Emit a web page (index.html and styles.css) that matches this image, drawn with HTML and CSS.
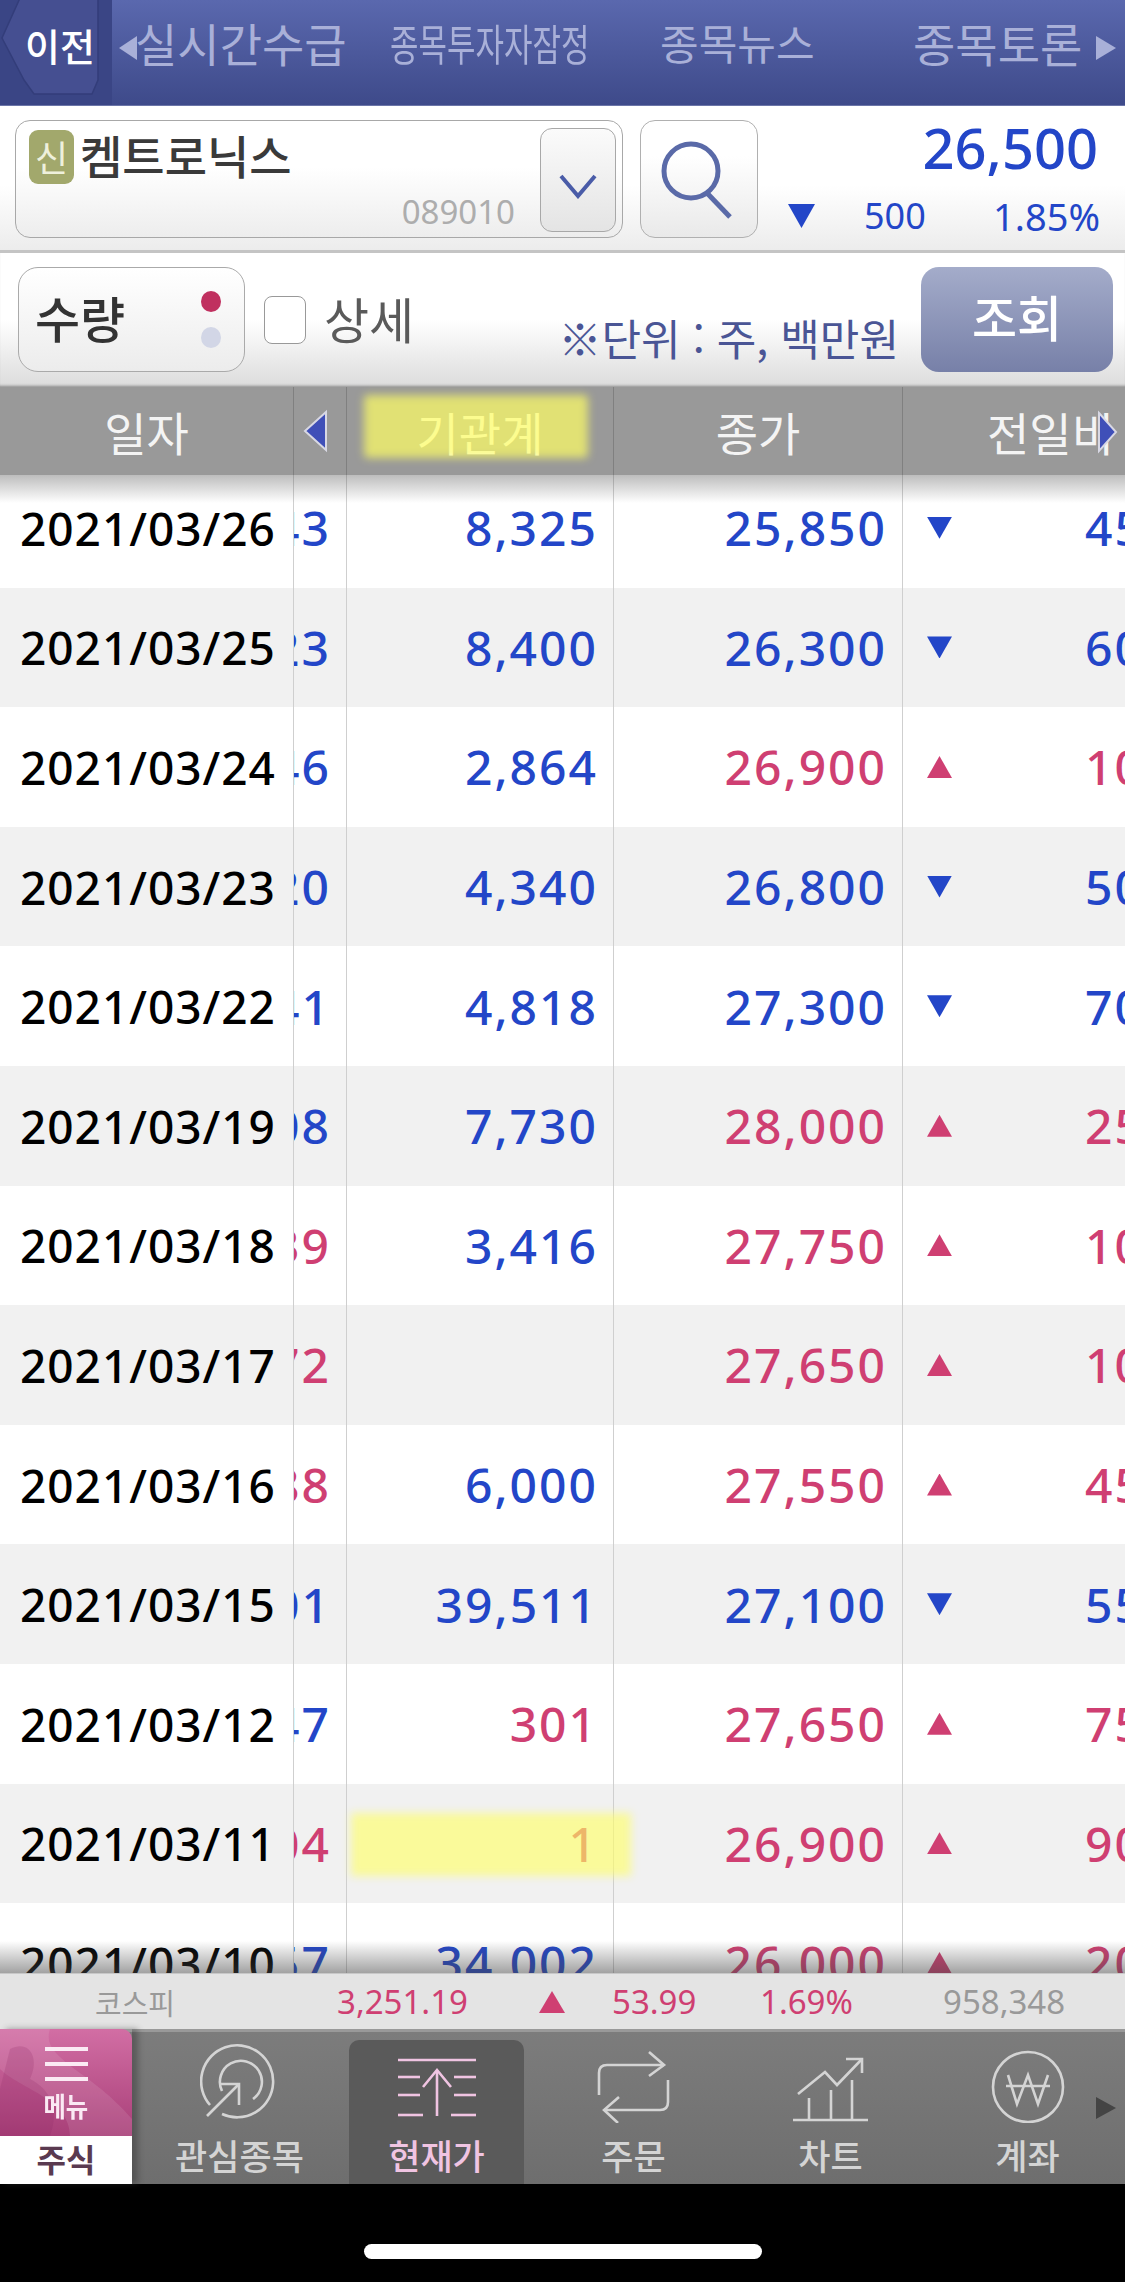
FILE: index.html
```html
<!DOCTYPE html>
<html lang="ko">
<head>
    <meta charset="UTF-8">
    <title>종목 투자자별 매매</title>
    <link rel="stylesheet" href="styles.css">
</head>
<body>
<div class="page">
    <!--상단 탭-->
    <div class="topNav">
        <div class="backBtn">
            <svg class="backShape" width="100" height="96" viewBox="0 0 100 96"><path d="M20 -2 L98 -2 L98 80 L92 94 L34 94 L24 80 L2 38 Z" fill="#454f91" stroke="#333d7a" stroke-width="1.5"/></svg>
            <span class="backText">이전</span>
        </div>
        <i class="navArrow navArrowLeft"></i>
        <span class="navTab navTab1">실시간수급</span>
        <span class="navTab navTab2"><b>종목투자자잠정</b></span>
        <span class="navTab navTab3">종목뉴스</span>
        <span class="navTab navTab4">종목토론</span>
        <i class="navArrow navArrowRight"></i>
    </div>

    <!--종목 검색-->
    <div class="stockBar">
        <div class="stockBox">
            <div class="stockInfo">
                <div class="stockName"><span class="badge">신</span>켐트로닉스</div>
                <div class="stockCode">089010</div>
            </div>
            <div class="dropBtn">
                <svg width="40" height="26" viewBox="0 0 40 26"><path d="M3 3 L20 23 L37 3" fill="none" stroke="#4a5ca8" stroke-width="4"/></svg>
            </div>
        </div>
        <div class="searchBtn">
            <svg width="90" height="90" viewBox="0 0 90 90"><circle cx="39" cy="38" r="27" fill="none" stroke="#5a6aa8" stroke-width="5"/><path d="M55 60 L78 84" fill="none" stroke="#5a6aa8" stroke-width="5"/></svg>
        </div>
        <div class="priceBox">
            <div class="price">26,500</div>
            <div class="priceSub"><i class="tri dn"></i><span class="priceDiff">500</span><span class="priceRate">1.85%</span></div>
        </div>
    </div>

    <!--조회 조건-->
    <div class="orderBar">
        <div class="qtyBox">
            <span class="qtyText">수량</span>
            <div class="qtyDots"><span class="dotOn"></span><span class="dotOff"></span></div>
        </div>
        <span class="checkBox"></span>
        <span class="detailText">상세</span>
        <span class="unitText">※단위 : 주, 백만원</span>
        <div class="queryBtn">조회</div>
    </div>

    <!--표 머리글-->
    <div class="row headRow">
        <div class="cell">일자</div>
        <div class="cell">
            <svg class="headPrev" width="28" height="44" viewBox="0 0 28 44"><path d="M25 3 L4 22 L25 41 Z" fill="#3f4fb8" stroke="#d8d8e4" stroke-width="2"/></svg>
        </div>
        <div class="cell">기관계</div>
        <div class="cell">종가</div>
        <div class="cell headChange">전일비</div>
        <svg class="headNext" width="26" height="44" viewBox="0 0 26 44"><path d="M5 3 L22 22 L5 41 Z" fill="#3f4fb8" stroke="#d8d8e4" stroke-width="2"/></svg>
        <div class="markHead"></div>
    </div>

    <!--표 본문-->
    <div class="tableBody">
        <div class="rows">
            <div class="row"><div class="cell date">2021/03/26</div><div class="cell num blue"><span>1,243</span></div><div class="cell num blue">8,325</div><div class="cell num blue">25,850</div><div class="cell change blue"><i class="tri dn"></i><span>450</span></div></div>
            <div class="row"><div class="cell date">2021/03/25</div><div class="cell num blue"><span>1,123</span></div><div class="cell num blue">8,400</div><div class="cell num blue">26,300</div><div class="cell change blue"><i class="tri dn"></i><span>600</span></div></div>
            <div class="row"><div class="cell date">2021/03/24</div><div class="cell num blue"><span>1,146</span></div><div class="cell num blue">2,864</div><div class="cell num red">26,900</div><div class="cell change red"><i class="tri up"></i><span>100</span></div></div>
            <div class="row"><div class="cell date">2021/03/23</div><div class="cell num blue"><span>1,120</span></div><div class="cell num blue">4,340</div><div class="cell num blue">26,800</div><div class="cell change blue"><i class="tri dn"></i><span>500</span></div></div>
            <div class="row"><div class="cell date">2021/03/22</div><div class="cell num blue"><span>1,141</span></div><div class="cell num blue">4,818</div><div class="cell num blue">27,300</div><div class="cell change blue"><i class="tri dn"></i><span>700</span></div></div>
            <div class="row"><div class="cell date">2021/03/19</div><div class="cell num blue"><span>1,008</span></div><div class="cell num blue">7,730</div><div class="cell num red">28,000</div><div class="cell change red"><i class="tri up"></i><span>250</span></div></div>
            <div class="row"><div class="cell date">2021/03/18</div><div class="cell num red"><span>1,339</span></div><div class="cell num blue">3,416</div><div class="cell num red">27,750</div><div class="cell change red"><i class="tri up"></i><span>100</span></div></div>
            <div class="row"><div class="cell date">2021/03/17</div><div class="cell num red"><span>1,172</span></div><div class="cell num blue"></div><div class="cell num red">27,650</div><div class="cell change red"><i class="tri up"></i><span>100</span></div></div>
            <div class="row"><div class="cell date">2021/03/16</div><div class="cell num red"><span>1,388</span></div><div class="cell num blue">6,000</div><div class="cell num red">27,550</div><div class="cell change red"><i class="tri up"></i><span>450</span></div></div>
            <div class="row"><div class="cell date">2021/03/15</div><div class="cell num blue"><span>1,001</span></div><div class="cell num blue">39,511</div><div class="cell num blue">27,100</div><div class="cell change blue"><i class="tri dn"></i><span>550</span></div></div>
            <div class="row"><div class="cell date">2021/03/12</div><div class="cell num blue"><span>1,147</span></div><div class="cell num red">301</div><div class="cell num red">27,650</div><div class="cell change red"><i class="tri up"></i><span>750</span></div></div>
            <div class="row markRow"><div class="cell date">2021/03/11</div><div class="cell num red"><span>1,104</span></div><div class="cell num red">1</div><div class="cell num red">26,900</div><div class="cell change red"><i class="tri up"></i><span>900</span></div><div class="markCell"></div></div>
            <div class="row"><div class="cell date">2021/03/10</div><div class="cell num blue"><span>1,157</span></div><div class="cell num blue">34,002</div><div class="cell num red">26,000</div><div class="cell change red"><i class="tri up"></i><span>200</span></div></div>
        </div>
    </div>

    <!--지수-->
    <div class="indexBar">
        <span class="idxName">코스피</span>
        <span class="idxValue">3,251.19</span>
        <i class="tri up idxTri"></i>
        <span class="idxDiff">53.99</span>
        <span class="idxRate">1.69%</span>
        <span class="idxVol">958,348</span>
    </div>

    <!--하단 메뉴-->
    <div class="tabBar">
        <div class="menuBtn">
            <div class="menuTop">
                <svg class="menuDeco" width="132" height="107" viewBox="0 0 132 107"><path d="M0 0 L50 0 C40 30 90 40 132 90 L132 107 L70 107 C70 70 20 60 0 40 Z" fill="#fff" opacity=".1"/><path d="M10 20 C30 10 40 30 30 50 C50 60 60 80 50 107 L0 107 L0 60 Z" fill="#8d2a64" opacity=".2"/></svg>
                <span class="menuLine"></span><span class="menuLine"></span><span class="menuLine"></span>
                <span class="menuLabel">메뉴</span>
            </div>
            <div class="menuBottom">주식</div>
        </div>
        <div class="tab">
            <svg width="80" height="80" viewBox="0 0 80 80"><g fill="none" stroke="#d4d4d4" stroke-width="2.6"><path d="M10 62 A36 36 0 1 1 22 71"/><path d="M22 48 A21 21 0 1 1 53 56"/><path d="M7 73 L39 41"/><path d="M19 41 L39 41 L39 62"/></g></svg>
            <span>관심종목</span>
        </div>
        <div class="tab tabActive">
            <svg width="80" height="80" viewBox="0 0 80 80"><g fill="none" stroke="#f0c4e2" stroke-width="2.6"><path d="M1 17 L79 17"/><path d="M1 34 L23 34"/><path d="M57 34 L79 34"/><path d="M1 52 L23 52"/><path d="M57 52 L79 52"/><path d="M1 72 L26 72"/><path d="M54 72 L79 72"/><path d="M40 73 L40 27"/><path d="M26 44 L40 27 L54 44"/></g></svg>
            <span>현재가</span>
        </div>
        <div class="tab">
            <svg width="80" height="80" viewBox="0 0 80 80"><g fill="none" stroke="#d4d4d4" stroke-width="2.6"><path d="M5 52 L5 30 Q5 22 13 22 L70 22"/><path d="M55 9 L70 22 L55 33"/><path d="M74 37 L74 59 Q74 67 66 67 L10 67"/><path d="M25 54 L10 67 L24 80"/></g></svg>
            <span>주문</span>
        </div>
        <div class="tab">
            <svg width="80" height="80" viewBox="0 0 80 80"><g fill="none" stroke="#d4d4d4" stroke-width="2.6"><path d="M2 77 L77 77"/><path d="M18 77 L18 55"/><path d="M40 77 L40 47"/><path d="M61 77 L61 37"/><path d="M7 51 L34 29 L46 42 L71 16"/><path d="M55 16 L71 16 L71 30"/></g></svg>
            <span>차트</span>
        </div>
        <div class="tab">
            <svg width="80" height="80" viewBox="0 0 80 80"><g fill="none" stroke="#d4d4d4" stroke-width="2.6"><circle cx="40" cy="44" r="35"/><path d="M20 32 L29 61 L40 32 L50 61 L60 32"/><path d="M18 43 L62 43"/></g></svg>
            <span>계좌</span>
        </div>
        <i class="tabNext"></i>
    </div>

    <!--홈 인디케이터-->
    <div class="homeArea"><span class="homeBar"></span></div>
</div>
</body>
</html>
```

FILE: styles.css
```css
*{
    padding: 0;
    margin: 0;
    box-sizing: border-box;
}
body{
    font-family: "Noto Sans", "Noto Sans CJK KR", sans-serif;
    background-color: #000;
}
i{
    display: block;
    flex: none;
}
.page{
    position: relative;
    width: 1125px;
    height: 2282px;
    overflow: hidden;
    display: flex;
    flex-direction: column;
    background-color: #fff;
}

/* 상단 탭 */
.topNav{
    position: relative;
    flex: none;
    display: flex;
    height: 106px;
    padding-top: 16px;
    color: #a9b0d8;
    background: linear-gradient(#5a68ae, #3e4a8a);
    border-bottom: 1px solid #6b75a8;
}
.backBtn{
    position: absolute;
    top: 0;
    left: 0;
    width: 112px;
    height: 105px;
    background-color: #3a4585;
}
.backShape{
    position: absolute;
    top: 0;
    left: 0;
}
.backText{
    position: absolute;
    top: 18px;
    left: 25px;
    font-family: "Noto Sans CJK KR", sans-serif;
    font-size: 38px;
    line-height: 54px;
    font-weight: 500;
    color: #fff;
}
.navArrow{
    position: absolute;
    top: 36px;
    width: 0;
    height: 0;
    border-top: 12px solid transparent;
    border-bottom: 12px solid transparent;
}
.navArrowLeft{
    left: 119px;
    border-right: 18px solid #a9b0d8;
}
.navArrowRight{
    left: 1096px;
    border-left: 20px solid #a9b0d8;
}
.navTab{
    position: absolute;
    top: 12px;
    font-family: "Noto Sans CJK KR", sans-serif;
    font-size: 46px;
    line-height: 60px;
    white-space: nowrap;
}
.navTab1{
    left: 135px;
}
.navTab2{
    left: 390px;
    width: 201px;
}
.navTab2 b{
    display: block;
    font-weight: 400;
    font-size: 43px;
    transform: scaleX(.72);
    transform-origin: left center;
}
.navTab3{
    left: 660px;
    font-size: 42px;
}
.navTab4{
    left: 913px;
}

/* 종목 검색 */
.stockBar{
    flex: none;
    display: flex;
    align-items: flex-start;
    height: 144px;
    padding: 14px 27px 0 15px;
    background: linear-gradient(#fff 55%, #ececec);
}
.stockBox{
    display: flex;
    width: 608px;
    height: 118px;
    padding: 7px 6px 6px 13px;
    border: 1px solid #a8a8a8;
    border-radius: 15px;
    background: linear-gradient(#fff 40%, #ededed);
}
.stockInfo{
    flex: 1;
    display: flex;
    flex-direction: column;
    justify-content: space-between;
}
.stockName{
    display: flex;
    align-items: flex-start;
    font-family: "Noto Sans CJK KR", sans-serif;
    font-size: 46px;
    line-height: 52px;
    font-weight: 500;
    color: #3a3a3a;
}
.badge{
    width: 45px;
    height: 54px;
    margin-top: 2px;
    margin-right: 6px;
    border-radius: 9px;
    font-size: 36px;
    line-height: 52px;
    font-weight: 400;
    text-align: center;
    color: #eef0dc;
    background-color: #a2a86c;
}
.stockCode{
    padding-right: 25px;
    font-size: 33px;
    line-height: 38px;
    text-align: right;
    color: #adadad;
}
.dropBtn{
    display: flex;
    align-items: center;
    justify-content: center;
    width: 76px;
    height: 104px;
    padding-top: 12px;
    border: 1px solid #a8a8a8;
    border-radius: 12px;
    background: linear-gradient(#fbfbfb, #e4e4e4);
}
.searchBtn{
    display: flex;
    align-items: center;
    justify-content: center;
    width: 118px;
    height: 118px;
    margin-left: 17px;
    padding: 0 4px 2px 0;
    border: 1px solid #b0b0b0;
    border-radius: 15px;
    background: linear-gradient(#fff 30%, #e9e9e9);
}
.priceBox{
    flex: 1;
    display: flex;
    flex-direction: column;
}
.price{
    margin-top: -3px;
    font-size: 56px;
    line-height: 60px;
    font-weight: 500;
    text-align: right;
    color: #2346c8;
}
.priceSub{
    display: flex;
    align-items: center;
    margin-top: 17px;
    padding-left: 30px;
    font-size: 36px;
    line-height: 44px;
    color: #2346c8;
}
.priceSub .tri{
    width: 27px;
    height: 24px;
    color: #2346c8;
}
.priceDiff{
    margin-left: 49px;
}
.priceRate{
    margin-left: auto;
    margin-right: -2px;
    font-size: 38px;
}

/* 조회 조건 */
.orderBar{
    flex: none;
    display: flex;
    height: 137px;
    padding: 14px 12px 0 18px;
    border-top: 3px solid #c4c4c4;
    background: linear-gradient(#fff 50%, #dcdcdc);
    box-shadow: inset 0 -3px 3px -2px #888;
}
.qtyBox{
    display: flex;
    align-items: center;
    justify-content: space-between;
    width: 227px;
    height: 105px;
    padding: 0 23px 6px 16px;
    border: 1px solid #aaa;
    border-radius: 20px;
    background: linear-gradient(#fff, #ececec);
}
.qtyText{
    font-family: "Noto Sans CJK KR", sans-serif;
    font-size: 49px;
    font-weight: 500;
    color: #333;
}
.qtyDots{
    display: flex;
    flex-direction: column;
    gap: 15px;
    padding-top: 6px;
}
.qtyDots span{
    width: 20px;
    height: 21px;
    border-radius: 50%;
}
.dotOn{
    background-color: #c0305f;
}
.dotOff{
    background-color: #d2d6e6;
}
.checkBox{
    width: 42px;
    height: 48px;
    margin: 29px 0 0 19px;
    border: 1px solid #999;
    border-radius: 8px;
    background-color: #fff;
}
.detailText{
    margin: 19px 0 0 18px;
    font-family: "Noto Sans CJK KR", sans-serif;
    font-size: 49px;
    line-height: 64px;
    color: #5a5a5a;
}
.unitText{
    margin: 41px -2px 0 auto;
    font-family: "Noto Sans CJK KR", sans-serif;
    font-size: 43px;
    line-height: 58px;
    color: #4a5595;
    white-space: nowrap;
}
.queryBtn{
    width: 192px;
    height: 105px;
    margin-left: 24px;
    border-radius: 18px;
    font-family: "Noto Sans CJK KR", sans-serif;
    font-size: 49px;
    line-height: 98px;
    font-weight: 500;
    text-align: center;
    color: #fff;
    background: linear-gradient(#a4acca, #7780a8);
}

/* 표 */
.row{
    position: relative;
    display: grid;
    grid-template-columns: 294px 53px 267px 289px 222px;
    height: 119.6px;
    overflow: hidden;
}
.rows .row:nth-child(even){
    background-color: #f1f1f1;
}
.cell{
    display: flex;
    align-items: center;
    overflow: hidden;
    white-space: nowrap;
    border-right: 1px solid #cfcfcf;
}
.date{
    padding-left: 20px;
    font-size: 46px;
    font-weight: 500;
    letter-spacing: 1px;
    color: #000;
}
.num{
    justify-content: flex-end;
    padding-right: 15px;
    font-size: 48px;
    font-weight: 500;
    letter-spacing: 2px;
}
.num span{
    flex: none;
}
.change{
    padding-left: 24px;
    font-size: 48px;
    font-weight: 500;
    letter-spacing: 2px;
    border-right: 0;
}
.change span{
    flex: none;
    margin-left: 133px;
}
.blue{
    color: #2346c8;
}
.red{
    color: #cf3f72;
}
.tri{
    width: 25px;
    height: 22px;
    background-color: currentColor;
}
.up{
    clip-path: polygon(50% 0, 100% 100%, 0 100%);
}
.dn{
    clip-path: polygon(0 0, 100% 0, 50% 100%);
}
.headRow{
    flex: none;
    height: 88px;
    overflow: visible;
    font-family: "Noto Sans CJK KR", sans-serif;
    font-size: 46px;
    color: #f4f4f4;
    background-color: #999;
}
.headRow .cell{
    justify-content: center;
    border-right-color: #808080;
}
.headRow .headChange{
    justify-content: flex-start;
    padding-left: 84px;
    border-right: 0;
}
.headPrev{
    flex: none;
    margin-right: 10px;
}
.headNext{
    position: absolute;
    top: 23px;
    left: 1094px;
}
.markHead{
    position: absolute;
    top: 8px;
    left: 364px;
    width: 224px;
    height: 63px;
    border-radius: 4px;
    background-color: rgba(255, 255, 100, .7);
    filter: blur(4px);
}
.tableBody{
    position: relative;
    flex: 1;
    min-height: 0;
    overflow: hidden;
}
.rows{
    margin-top: -7px;
}
.tableBody::before,
.tableBody::after{
    content: "";
    position: absolute;
    z-index: 1;
    left: 0;
    right: 0;
}
.tableBody::before{
    top: 0;
    height: 28px;
    background: linear-gradient(rgba(90, 90, 90, .4), rgba(90, 90, 90, 0));
}
.tableBody::after{
    bottom: 0;
    height: 32px;
    background: linear-gradient(rgba(70, 70, 70, 0), rgba(70, 70, 70, .5));
}
.markCell{
    position: absolute;
    top: 29px;
    left: 351px;
    width: 280px;
    height: 63px;
    background-color: rgba(255, 255, 100, .62);
    filter: blur(4px);
}

/* 지수 */
.indexBar{
    position: relative;
    flex: none;
    height: 56px;
    font-size: 33px;
    line-height: 56px;
    color: #cf3f72;
    background-color: #e4e4e4;
    border-top: 1px solid #c8c8c8;
}
.indexBar span,
.idxTri{
    position: absolute;
    top: 0;
}
.idxName{
    left: 95px;
    font-family: "Noto Sans CJK KR", sans-serif;
    font-size: 29px;
    color: #999;
}
.idxValue{
    left: 337px;
}
.idxTri{
    top: 17px;
    left: 539px;
    width: 26px;
    height: 22px;
}
.idxDiff{
    left: 612px;
}
.idxRate{
    left: 760px;
}
.idxVol{
    left: 943px;
    color: #999;
}

/* 하단 메뉴 */
.tabBar{
    position: relative;
    flex: none;
    display: flex;
    height: 155px;
    padding-left: 141px;
    font-family: "Noto Sans CJK KR", sans-serif;
    background: linear-gradient(#7c7c7c, #6e6e6e);
    border-top: 3px solid #999;
}
.menuBtn{
    position: absolute;
    top: -3px;
    left: 0;
    width: 132px;
    height: 155px;
    box-shadow: 6px 0 6px rgba(50, 50, 50, .45);
}
.menuTop{
    position: relative;
    display: flex;
    flex-direction: column;
    align-items: center;
    height: 107px;
    padding-top: 18px;
    border-radius: 0 10px 0 0;
    overflow: hidden;
    background: linear-gradient(#d26ea4, #a83f78);
}
.menuDeco{
    position: absolute;
    top: 0;
    left: 0;
}
.menuLine{
    position: relative;
    flex: none;
    width: 43px;
    height: 4px;
    margin-bottom: 11px;
    background-color: #fbeaf4;
}
.menuLabel{
    position: relative;
    margin-top: -2px;
    font-size: 27px;
    line-height: 32px;
    font-weight: 700;
    color: #fbeaf4;
    transform: scaleX(.9);
}
.menuBottom{
    height: 48px;
    font-size: 32px;
    line-height: 44px;
    font-weight: 700;
    text-align: center;
    color: #5a3a50;
    background-color: #fff;
}
.tab{
    flex: none;
    display: flex;
    flex-direction: column;
    align-items: center;
    width: 197px;
    padding-top: 11px;
    font-size: 35px;
    line-height: 40px;
    font-weight: 500;
    color: #d4d4d4;
}
.tab svg{
    flex: none;
}
.tab span{
    margin-top: 12px;
}
.tabActive{
    width: 175px;
    margin: 8px 11px 0;
    padding-top: 3px;
    border-radius: 10px 10px 0 0;
    color: #f0c4e2;
    background-color: #5a5a5a;
}
.tabNext{
    position: absolute;
    top: 65px;
    left: 1096px;
    width: 0;
    height: 0;
    border-top: 11px solid transparent;
    border-bottom: 11px solid transparent;
    border-left: 20px solid #444;
}

/* 홈 인디케이터 */
.homeArea{
    flex: none;
    display: flex;
    justify-content: center;
    height: 98px;
    padding-top: 60px;
    background-color: #000;
}
.homeBar{
    width: 398px;
    height: 15px;
    border-radius: 8px;
    background-color: #fff;
}
```
